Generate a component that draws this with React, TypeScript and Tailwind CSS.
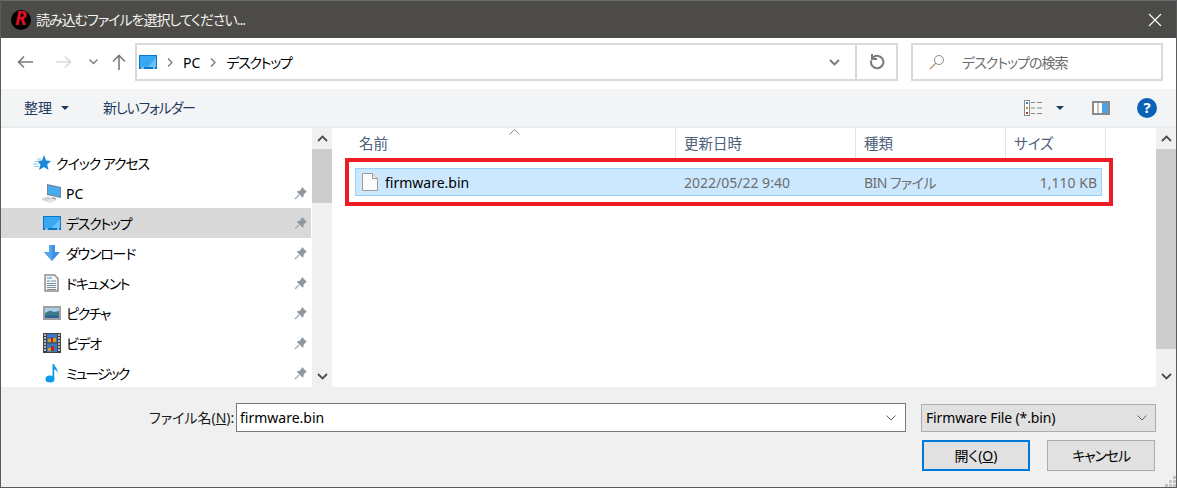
const Logo = () => (
    <div className="flex h-[20px] w-[20px] items-center justify-center rounded-full bg-black">
        <span className="-mt-[2px] text-[19px] font-bold italic leading-none text-[#e01020]">R</span>
    </div>
);

const Pin = () => (
    <svg width="14" height="14" viewBox="0 0 14 14" className="shrink-0">
        <path d="M8 1 L13 6 L11.5 6.5 L9.5 9 L9.5 11 L8.5 11.5 L3 6 L3.5 5 L5.5 5 L7.5 2.5 Z" fill="#8f989f" />
        <path d="M5 9 L1 13" stroke="#a9b0b6" strokeWidth="1.4" />
    </svg>
);

const Desktop = () => (
    <svg width="18" height="14" viewBox="0 0 18 14">
        <rect x="0" y="0" width="18" height="14" fill="#0b77c9" />
        <path d="M1 1 H17 V12 H1 Z" fill="#39a8f2" />
        <path d="M9 12 L17 3 V12 Z" fill="#6cc2f8" />
        <path d="M2 13 H5 M14 13 H16" stroke="#fff" strokeWidth="1" />
    </svg>
);

const PcIcon = () => (
    <svg width="21" height="19" viewBox="0 0 21 19">
        <path d="M6 0 L20 3 V14 L6 11 Z" fill="#6f8798" />
        <path d="M7 1.500 L19 4 V12.500 L7 10 Z" fill="#45aef0" />
        <path d="M11 13 L15 14 V16 L11 15 Z" fill="#9aa4aa" />
        <path d="M0 15 L7 12.500 L12 14.500 L5 17.500 Z" fill="#cfd2d4" />
        <path d="M5 17.500 L12 15 L16 16 L9 19 Z" fill="#dfe1e3" />
    </svg>
);

const DownloadIcon = () => (
    <svg width="16" height="16" viewBox="0 0 16 16">
        <path d="M5 0 H11 V7 H16 L8 16 L0 7 H5 Z" fill="#3c92e0" />
        <path d="M5 0 H8 V16 L0 7 H5 Z" fill="#52a6ee" />
    </svg>
);

const DocIcon = () => (
    <svg width="15" height="18" viewBox="0 0 15 18">
        <path d="M1 1 H10.500 L14 4.500 V17 H1 Z" fill="#f4f4f4" stroke="#8f8f8f" strokeWidth="1.500" />
        <path d="M3 4 H8 M3 7 H6" stroke="#2f9ae0" strokeWidth="1" />
        <path d="M7 7 H12 M3 9.500 H12 M3 11.500 H12 M3 13.500 H12 M3 15.500 H12" stroke="#7d8f9c" strokeWidth="1" />
    </svg>
);

const PictureIcon = () => (
    <svg width="18" height="14" viewBox="0 0 18 14">
        <rect x="1" y="1" width="16" height="12" fill="#fff" stroke="#a0a0a0" strokeWidth="2" />
        <rect x="2" y="2" width="14" height="5" fill="#a9d0e8" />
        <path d="M2 7 L7 4.500 L11 6 L16 5 V12 H2 Z" fill="#3f7a8a" />
        <rect x="2" y="9.500" width="14" height="2.500" fill="#2f5f9a" />
    </svg>
);

const VideoIcon = () => (
    <svg width="18" height="20" viewBox="0 0 18 20">
        <rect width="18" height="20" fill="#444" />
        <path d="M1 2 H3 M1 5 H3 M1 8 H3 M1 11 H3 M1 14 H3 M1 17 H3 M15 2 H17 M15 5 H17 M15 8 H17 M15 11 H17 M15 14 H17 M15 17 H17" stroke="#ddd" strokeWidth="1.500" />
        <rect x="4" y="1" width="10" height="8.500" fill="#3a78c8" />
        <rect x="4" y="10.500" width="10" height="8.500" fill="#3a78c8" />
        <path d="M5 6 H8 V9 H5 Z M10 5 H13 V9 H10 Z M5 15 H8 V18 H5 Z" fill="#d8a020" />
        <path d="M8 4 H10 V9 H8 Z M8 13 H11 V18 H8 Z" fill="#b02a20" />
    </svg>
);

const MusicIcon = () => (
    <svg width="14" height="20" viewBox="0 0 14 20">
        <ellipse cx="5" cy="16" rx="4.500" ry="3.500" fill="#0c9be8" />
        <path d="M7.500 16 V1 H9 C9.500 4 13 5 12.500 10 C11.500 7.500 10.500 6.500 9.200 6.500 V16 Z" fill="#0c9be8" />
    </svg>
);

const StarIcon = () => (
    <svg width="18" height="16" viewBox="0 0 18 16">
        <path d="M11 0 L13 5.500 L18 6 L14.200 9.500 L15.500 15 L11 12 L6 15 L7.500 9.500 L4 6 L9 5.500 Z" fill="#1a88d8" />
        <path d="M0 9 H5 M1 11.500 H6 M2 6.500 H6 M4 4 H8" stroke="#86c5ef" strokeWidth="1" />
    </svg>
);

const Chevron = ({ up = false, color = "#4d4d4d" }: { up?: boolean; color?: string }) => (
    <svg width="11" height="7" viewBox="0 0 11 7">
        <path d={up ? "M1 6 L5.500 1.500 L10 6" : "M1 1 L5.500 5.500 L10 1"} fill="none" stroke={color} strokeWidth="1.800" />
    </svg>
);

const Thin = () => (
    <svg width="10" height="6" viewBox="0 0 10 6">
        <path d="M.5 .5 L5 5 L9.500 .5" fill="none" stroke="#606060" strokeWidth="1" />
    </svg>
);

const Caret = ({ color = "#1f3a5f" }: { color?: string }) => (
    <svg width="8" height="4" viewBox="0 0 8 4">
        <path d="M0 0 H8 L4 4 Z" fill={color} />
    </svg>
);

const Crumb = () => (
    <svg width="6" height="9" viewBox="0 0 6 9">
        <path d="M1 .5 L5 4.500 L1 8.500" fill="none" stroke="#7a7a7a" strokeWidth="1.300" />
    </svg>
);

const navItems = [
    { label: "PC", icon: <PcIcon />, tracking: "" },
    { label: "デスクトップ", icon: <Desktop />, tracking: "tracking-[-1.3px]", active: true },
    { label: "ダウンロード", icon: <DownloadIcon />, tracking: "tracking-[-1.2px]" },
    { label: "ドキュメント", icon: <DocIcon />, tracking: "tracking-[-1.4px]" },
    { label: "ピクチャ", icon: <PictureIcon />, tracking: "tracking-[-1.4px]" },
    { label: "ビデオ", icon: <VideoIcon />, tracking: "tracking-[-1.3px]" },
    { label: "ミュージック", icon: <MusicIcon />, tracking: "tracking-[-2px]" },
];

const Scrollbar = ({ thumbHeight }: { thumbHeight: string }) => (
    <div className="flex w-[20px] shrink-0 flex-col bg-[#f0f0f0]">
        <div className="flex h-[21px] shrink-0 items-center justify-center">
            <Chevron up />
        </div>
        <div className={`${thumbHeight} shrink-0 bg-[#cdcdcd]`} />
        <div className="flex-1" />
        <div className="flex h-[21px] shrink-0 items-center justify-center">
            <Chevron />
        </div>
    </div>
);

const HeaderCell = ({ label, width }: { label: string; width: string }) => (
    <div className={`${width} flex h-full shrink-0 items-center border-r border-[#e5e5e5] pl-[8px] pt-[2px] text-[14.500px] text-[#4c607a]`}>
        {label}
    </div>
);

export default function App() {
    return (
        <div className="flex h-[488px] w-[1177px] flex-col overflow-hidden border-x border-b border-[#5a5a5a] bg-white text-[14px] text-black [font-family:'Noto_Sans','Noto_Sans_CJK_JP',sans-serif] [font-feature-settings:'palt']">
            {/* Title bar */}
            <div className="flex h-[38px] shrink-0 items-center border-t border-[#6a6a6a] bg-[#4d4b48] pl-[10px] pr-[14px]">
                <Logo />
                <span className="ml-[5px] tracking-[-1px] text-[#f2f2f2]">読み込むファイルを選択してください...</span>
                <svg width="14" height="14" viewBox="0 0 14 14" className="ml-auto">
                    <path d="M1 1 L13 13 M13 1 L1 13" stroke="#fff" strokeWidth="1.100" />
                </svg>
            </div>

            {/* Address row */}
            <div className="flex h-[51px] shrink-0 items-start pl-[16px] pr-[13px] pt-[5px]">
                <div className="flex h-[38px] items-center">
                    <svg width="16" height="14" viewBox="0 0 16 14">
                        <path d="M7 1.500 L1.500 7 L7 12.500 M2 7 H16" fill="none" stroke="#7a7a7a" strokeWidth="1.600" />
                    </svg>
                    <svg width="16" height="14" viewBox="0 0 16 14" className="ml-[23px]">
                        <path d="M9 1.500 L14.500 7 L9 12.500 M14 7 H0" fill="none" stroke="#d9d9d9" strokeWidth="1.600" />
                    </svg>
                    <svg width="9" height="6" viewBox="0 0 9 6" className="ml-[17px] block">
                        <path d="M.5 .5 L4.500 4.500 L8.500 .5" fill="none" stroke="#7a7a7a" strokeWidth="1.400" />
                    </svg>
                    <svg width="14" height="16" viewBox="0 0 14 16" className="ml-[14px]">
                        <path d="M1 7.500 L7 1.500 L13 7.500 M7 2 V16" fill="none" stroke="#7a7a7a" strokeWidth="1.600" />
                    </svg>
                </div>
                <div className="ml-[9px] flex h-[38px] w-[763px] shrink-0 items-center border-2 border-[#d9d9d9]">
                    <div className="flex flex-1 items-center pl-[2px]">
                        <Desktop />
                        <span className="ml-[10px]"><Crumb /></span>
                        <span className="ml-[10px]">PC</span>
                        <span className="ml-[10px]"><Crumb /></span>
                        <span className="ml-[10px] tracking-[-1.300px]">デスクトップ</span>
                        <span className="ml-auto mr-[15px]"><Chevron color="#777" /></span>
                    </div>
                    <div className="flex h-full w-[41px] items-center justify-center border-l-2 border-[#d9d9d9]">
                        <svg width="16" height="16" viewBox="0 0 16 16">
                            <path d="M3.700 3.800 A6.200 6.200 0 1 1 2.200 6.500" fill="none" stroke="#7a7a7a" strokeWidth="2" />
                            <path d="M3 0 V5 H8" fill="none" stroke="#7a7a7a" strokeWidth="2" />
                        </svg>
                    </div>
                </div>
                <div className="ml-[13px] flex h-[38px] flex-1 items-center border-2 border-[#d9d9d9] pl-[16px] text-[#6d6d6d]">
                    <svg width="16" height="16" viewBox="0 0 16 16">
                        <circle cx="10" cy="6" r="4.500" fill="none" stroke="#8a8a8a" strokeWidth="1" />
                        <path d="M6.800 9.200 L1 15" stroke="#b08a60" strokeWidth="1.100" />
                    </svg>
                    <span className="ml-[17px] tracking-[-1px]">デスクトップの検索</span>
                </div>
            </div>

            {/* Command bar */}
            <div className="flex h-[39px] shrink-0 items-center border-b-2 border-[#e9eaec] bg-[#f3f4f6] pl-[23px] pr-[19px] text-[#1f3a5f]">
                <span>整理</span>
                <span className="ml-[9px]"><Caret /></span>
                <span className="ml-[34px] tracking-[-1.200px]">新しいフォルダー</span>
                <svg width="18" height="16" viewBox="0 0 18 16" className="ml-auto">
                    <rect x=".5" y=".5" width="5" height="15" fill="#fff" stroke="#8a8a8a" />
                    <path d="M2 3 H4" stroke="#2a7fc0" strokeWidth="2" />
                    <path d="M2 8 H4" stroke="#c09030" strokeWidth="2" />
                    <path d="M2 13 H4" stroke="#c03030" strokeWidth="2" />
                    <path d="M7 2.500 H11 M13 2.500 H18 M7 8 H11 M13 8 H18 M7 13.500 H11 M13 13.500 H18" stroke="#8a8a8a" strokeWidth="1" />
                </svg>
                <span className="ml-[14px]"><Caret /></span>
                <svg width="18" height="14" viewBox="0 0 18 14" className="ml-[28px]">
                    <rect x="1" y="1" width="16" height="12" fill="#fff" stroke="#8a8a8a" strokeWidth="2" />
                    <rect x="10" y="2" width="6" height="10" fill="#4da3e6" />
                    <path d="M6 2 V12" stroke="#8a8a8a" strokeWidth="1" />
                </svg>
                <div className="ml-[27px] flex h-[20px] w-[20px] items-center justify-center rounded-full bg-[#0a62b8] text-[15px] font-bold leading-none text-white">
                    ?
                </div>
            </div>

            {/* Panes */}
            <div className="flex h-[259px] shrink-0">
                <div className="flex w-[310px] shrink-0 flex-col overflow-hidden pt-[20px]">
                    <div className="flex h-[30px] shrink-0 items-center gap-[5px] pl-[32px]">
                        <StarIcon />
                        <span className="tracking-[-1.100px]">クイック アクセス</span>
                    </div>
                    {navItems.map((item) => (
                        <div
                            key={item.label}
                            className={`flex h-[30px] shrink-0 items-center pr-[3px] ${item.active ? "bg-[#d9d9d9]" : ""}`}
                        >
                            <div className="flex w-[65px] shrink-0 justify-center pl-[36px]">{item.icon}</div>
                            <span className={item.tracking}>{item.label}</span>
                            <span className="ml-auto"><Pin /></span>
                        </div>
                    ))}
                </div>
                <div className="w-[1px] shrink-0" />
                <Scrollbar thumbHeight="h-[54px]" />
                <div className="relative flex min-w-0 flex-1 flex-col">
                    <span className="absolute left-[177px] top-[1px]">
                        <svg width="11" height="6" viewBox="0 0 11 6">
                            <path d="M.5 5.500 L5.500 .5 L10.500 5.500" fill="none" stroke="#8a8a8a" strokeWidth="1" />
                        </svg>
                    </span>
                    <div className="flex h-[30px] shrink-0 pl-[19px]">
                        <HeaderCell label="名前" width="w-[325px]" />
                        <HeaderCell label="更新日時" width="w-[180px]" />
                        <HeaderCell label="種類" width="w-[150px]" />
                        <HeaderCell label="サイズ" width="w-[100px]" />
                    </div>
                    <div className="ml-[23px] mt-[10px] flex h-[28px] w-[747px] items-center border border-[#99d1ff] bg-[#cce8ff]">
                        <svg width="16" height="18" viewBox="0 0 16 18" className="ml-[6px] shrink-0">
                            <path d="M.5 .5 H10.500 L15.500 5.500 V17.500 H.5 Z" fill="#fbfbfb" stroke="#9c9c9c" />
                            <path d="M10.500 .5 V5.500 H15.500" fill="#e8e8e8" stroke="#9c9c9c" />
                        </svg>
                        <span className="ml-[7px] w-[299px] shrink-0">firmware.bin</span>
                        <span className="w-[180px] shrink-0 text-[#6d6d6d]">2022/05/22 9:40</span>
                        <span className="w-[100px] shrink-0 tracking-[-0.600px] text-[#6d6d6d]">BIN ファイル</span>
                        <span className="flex-1 pr-[4px] text-right text-[#6d6d6d]">1,110 KB</span>
                    </div>
                    {/* Red annotation box */}
                    <div className="pointer-events-none absolute left-[13px] top-[30px] h-[48px] w-[768px] border-4 border-[#ed1c24]" />
                </div>
                <Scrollbar thumbHeight="h-[200px]" />
            </div>

            {/* Footer */}
            <div className="relative flex flex-1 flex-col bg-[#f0f0f0] pl-[148px] pr-[20px] pt-[16px]">
                <div className="flex h-[29px] items-center">
                    <span className="w-[87px] shrink-0 text-[#1a1a1a]">ファイル名(<span className="underline">N</span>):</span>
                    <div className="flex h-[29px] w-[670px] shrink-0 items-center border border-[#7a7a7a] bg-white pl-[3px]">
                        <span>firmware.bin</span>
                        <span className="ml-auto mr-[9px]"><Thin /></span>
                    </div>
                    <div className="ml-[15px] flex h-[28px] flex-1 items-center border border-[#adadad] bg-[#e1e1e1] pl-[4px]">
                        <span className="tracking-[-0.150px]">Firmware File (*.bin)</span>
                        <span className="ml-auto mr-[8px]"><Thin /></span>
                    </div>
                </div>
                <div className="mt-[8px] flex justify-end pr-[1px]">
                    <div className="flex h-[31px] w-[108px] items-center justify-center border-2 border-[#0078d7] bg-[#e1e1e1]">
                        開く(<span className="underline">O</span>)
                    </div>
                    <div className="ml-[17px] flex h-[31px] w-[108px] items-center justify-center border border-[#adadad] bg-[#e1e1e1] tracking-[-1.200px]">
                        キャンセル
                    </div>
                </div>
                {/* Resize grip */}
                <svg width="11" height="11" viewBox="0 0 11 11" className="absolute bottom-0 right-0">
                    <path d="M8 0 H11 V3 H8 Z M4 4 H7 V7 H4 Z M8 4 H11 V7 H8 Z M0 8 H3 V11 H0 Z M4 8 H7 V11 H4 Z M8 8 H11 V11 H8 Z" fill="#c4c4c4" />
                </svg>
            </div>
        </div>
    );
}
